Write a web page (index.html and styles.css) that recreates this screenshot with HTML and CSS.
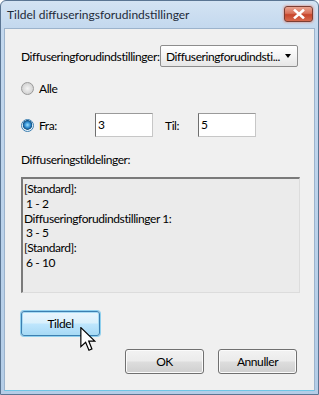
FILE: index.html
```html
<!DOCTYPE html>
<html>
<head>
<meta charset="utf-8">
<link rel="stylesheet" href="styles.css">
</head>
<body>
<div class="window">
  <div class="titlebar">
    <span class="title">Tildel diffuseringsforudindstillinger</span>
    <span class="close"><svg width="14" height="10" viewBox="0 0 14 10"><path d="M3 1.5 L11 8.5 M11 1.5 L3 8.5" stroke="#fff" stroke-width="2.6" stroke-linecap="square"/></svg></span>
  </div>
  <div class="client">
    <div class="row presetrow">
      <span class="lbl">Diffuseringforudindstillinger:</span>
      <div class="combo"><span class="combo-text">Diffuseringforudindsti...</span><span class="arrow"></span></div>
    </div>
    <div class="row radiorow">
      <span class="radio"></span><span class="lbl">Alle</span>
    </div>
    <div class="row fromrow">
      <span class="radio checked"></span><span class="lbl fra">Fra:</span>
      <div class="input">3</div>
      <span class="lbl til">Til:</span>
      <div class="input">5</div>
    </div>
    <div class="row listlabel"><span class="lbl">Diffuseringstildelinger:</span></div>
    <div class="list">
      <div>[Standard]:</div>
      <div class="ind">1 - 2</div>
      <div>Diffuseringforudindstillinger 1:</div>
      <div class="ind">3 - 5</div>
      <div>[Standard]:</div>
      <div class="ind">6 - 10</div>
    </div>
    <div class="row assignrow">
      <div class="btn focused">Tildel</div>
    </div>
    <div class="row okrow">
      <div class="btn">OK</div>
      <div class="btn">Annuller</div>
    </div>
  </div>
  <svg class="cursor" width="16" height="25" viewBox="0 0 13 21"><path d="M0.5 0.5 L0.5 16.5 L4.5 12.8 L7.3 19.5 L9.8 18.4 L7.1 11.8 L12.2 11.8 Z" fill="#fff" stroke="#000" stroke-width="1" stroke-linejoin="miter"/></svg>
</div>
</body>
</html>
```
FILE: styles.css
```css
html, body { margin: 0; padding: 0; }
body {
  width: 319px; height: 395px; overflow: hidden; background: #ffffff;
  font-family: Lato, "Noto Sans", sans-serif; font-size: 12px; letter-spacing: -0.42px; color: #000;
}
.window {
  position: relative;
  width: 319px; height: 395px; box-sizing: border-box;
  border: 1px solid #5a7593; border-radius: 6px 6px 0 0;
  background: linear-gradient(180deg, #d3e3f3 0px, #c3d8ee 28px, #b4cde7 100%);
  display: flex; flex-direction: column;
}
.titlebar {
  height: 27px; display: flex; align-items: flex-start; justify-content: space-between;
  padding: 0 5px 0 6px;
}
.title { margin-top: 6px; font-size: 12px; letter-spacing: 0; color: #1e2b3a; }
.close {
  margin-top: 5px; width: 29px; height: 16px; box-sizing: border-box;
  border: 1px solid #7c3e33; border-radius: 3px;
  background: linear-gradient(180deg, #eaa491 0%, #d9725b 45%, #c7452b 55%, #d76b4f 100%);
  box-shadow: 0 0 2px 1px rgba(230, 120, 100, 0.45);
  display: flex; align-items: center; justify-content: center;
}
.client {
  flex: 1; margin: 0 3px 3px 3px; background: #f0f0f0;
  border: 1px solid #9cb3cc; border-bottom-color: #6ec6e6;
  padding: 16px 16px 0 16px; display: flex; flex-direction: column;
}
.row { display: flex; align-items: center; }
.presetrow { height: 22px; }
.presetrow .lbl { width: 140px; white-space: nowrap; }
.combo {
  width: 139px; height: 22px; box-sizing: border-box;
  border: 1px solid #8d8d8d; border-radius: 2px;
  background: linear-gradient(180deg, #ffffff 0%, #f4f4f4 50%, #e6e6e6 100%);
  display: flex; align-items: center; padding-left: 5px;
}
.combo-text { flex: 1; white-space: nowrap; overflow: hidden; }
.arrow {
  width: 0; height: 0; margin: 0 6px 0 4px;
  border-left: 3.5px solid transparent; border-right: 3.5px solid transparent; border-top: 4px solid #000;
}
.radio {
  width: 13px; height: 13px; box-sizing: border-box; border-radius: 50%;
  border: 1px solid #9a9a9a;
  background: radial-gradient(circle at 50% 50%, #f4f4f4 0%, #d8d8d8 60%, #c8c8c8 100%);
  margin-right: 5px;
}
.radio.checked {
  border-color: #3c7fb1;
  background: radial-gradient(circle at 50% 45%, #9be1ff 0%, #2d8bd1 35%, #13507f 55%, #e9f4fb 62%, #cfe3f0 100%);
}
.radiorow { margin-top: 13px; height: 16px; }
.fromrow { margin-top: 17px; height: 24px; }
.fra { width: 56px; }
.input {
  width: 58px; height: 24px; box-sizing: border-box; background: #fff;
  border: 1px solid #c7c7c7; border-left-color: #6f6f6f; border-top-color: #9a9a9a;
  padding: 3px 0 0 2px; line-height: 16px;
}
.til { width: 33px; margin-left: 12px; }
.listlabel { margin-top: 14px; height: 16px; }
.list {
  margin-top: 10px; height: 116px; box-sizing: border-box;
  width: 279px;
  background: #ebebeb;
  border: 1px solid #dcdcdc; border-left: 2px solid #7a7a7a; border-top: 2px solid #7a7a7a;
  padding: 3px 0 0 1px; line-height: 14.8px;
}
.list .ind { padding-left: 2px; }
.assignrow { margin-top: 18px; }
.okrow { margin-top: 13px; justify-content: flex-end; gap: 14px; padding-right: 1px; }
.btn {
  width: 79px; height: 25px; box-sizing: border-box;
  border: 1px solid #707070; border-radius: 3px;
  background: linear-gradient(180deg, #f2f2f2 0%, #ebebeb 48%, #dddddd 52%, #cfcfcf 100%);
  display: flex; align-items: center; justify-content: center;
  box-shadow: inset 0 0 0 1px #fbfbfb;
}
.btn.focused {
  border-color: #3c7fb1;
  box-shadow: inset 0 0 0 1px #a8dcf4, 0 0 0 1px #8fd0ee;
  background: linear-gradient(180deg, #eaf6fd 0%, #d9f0fc 48%, #bee6fd 52%, #a7d9f5 100%);
}
.cursor { position: absolute; left: 79px; top: 326px; }
```
